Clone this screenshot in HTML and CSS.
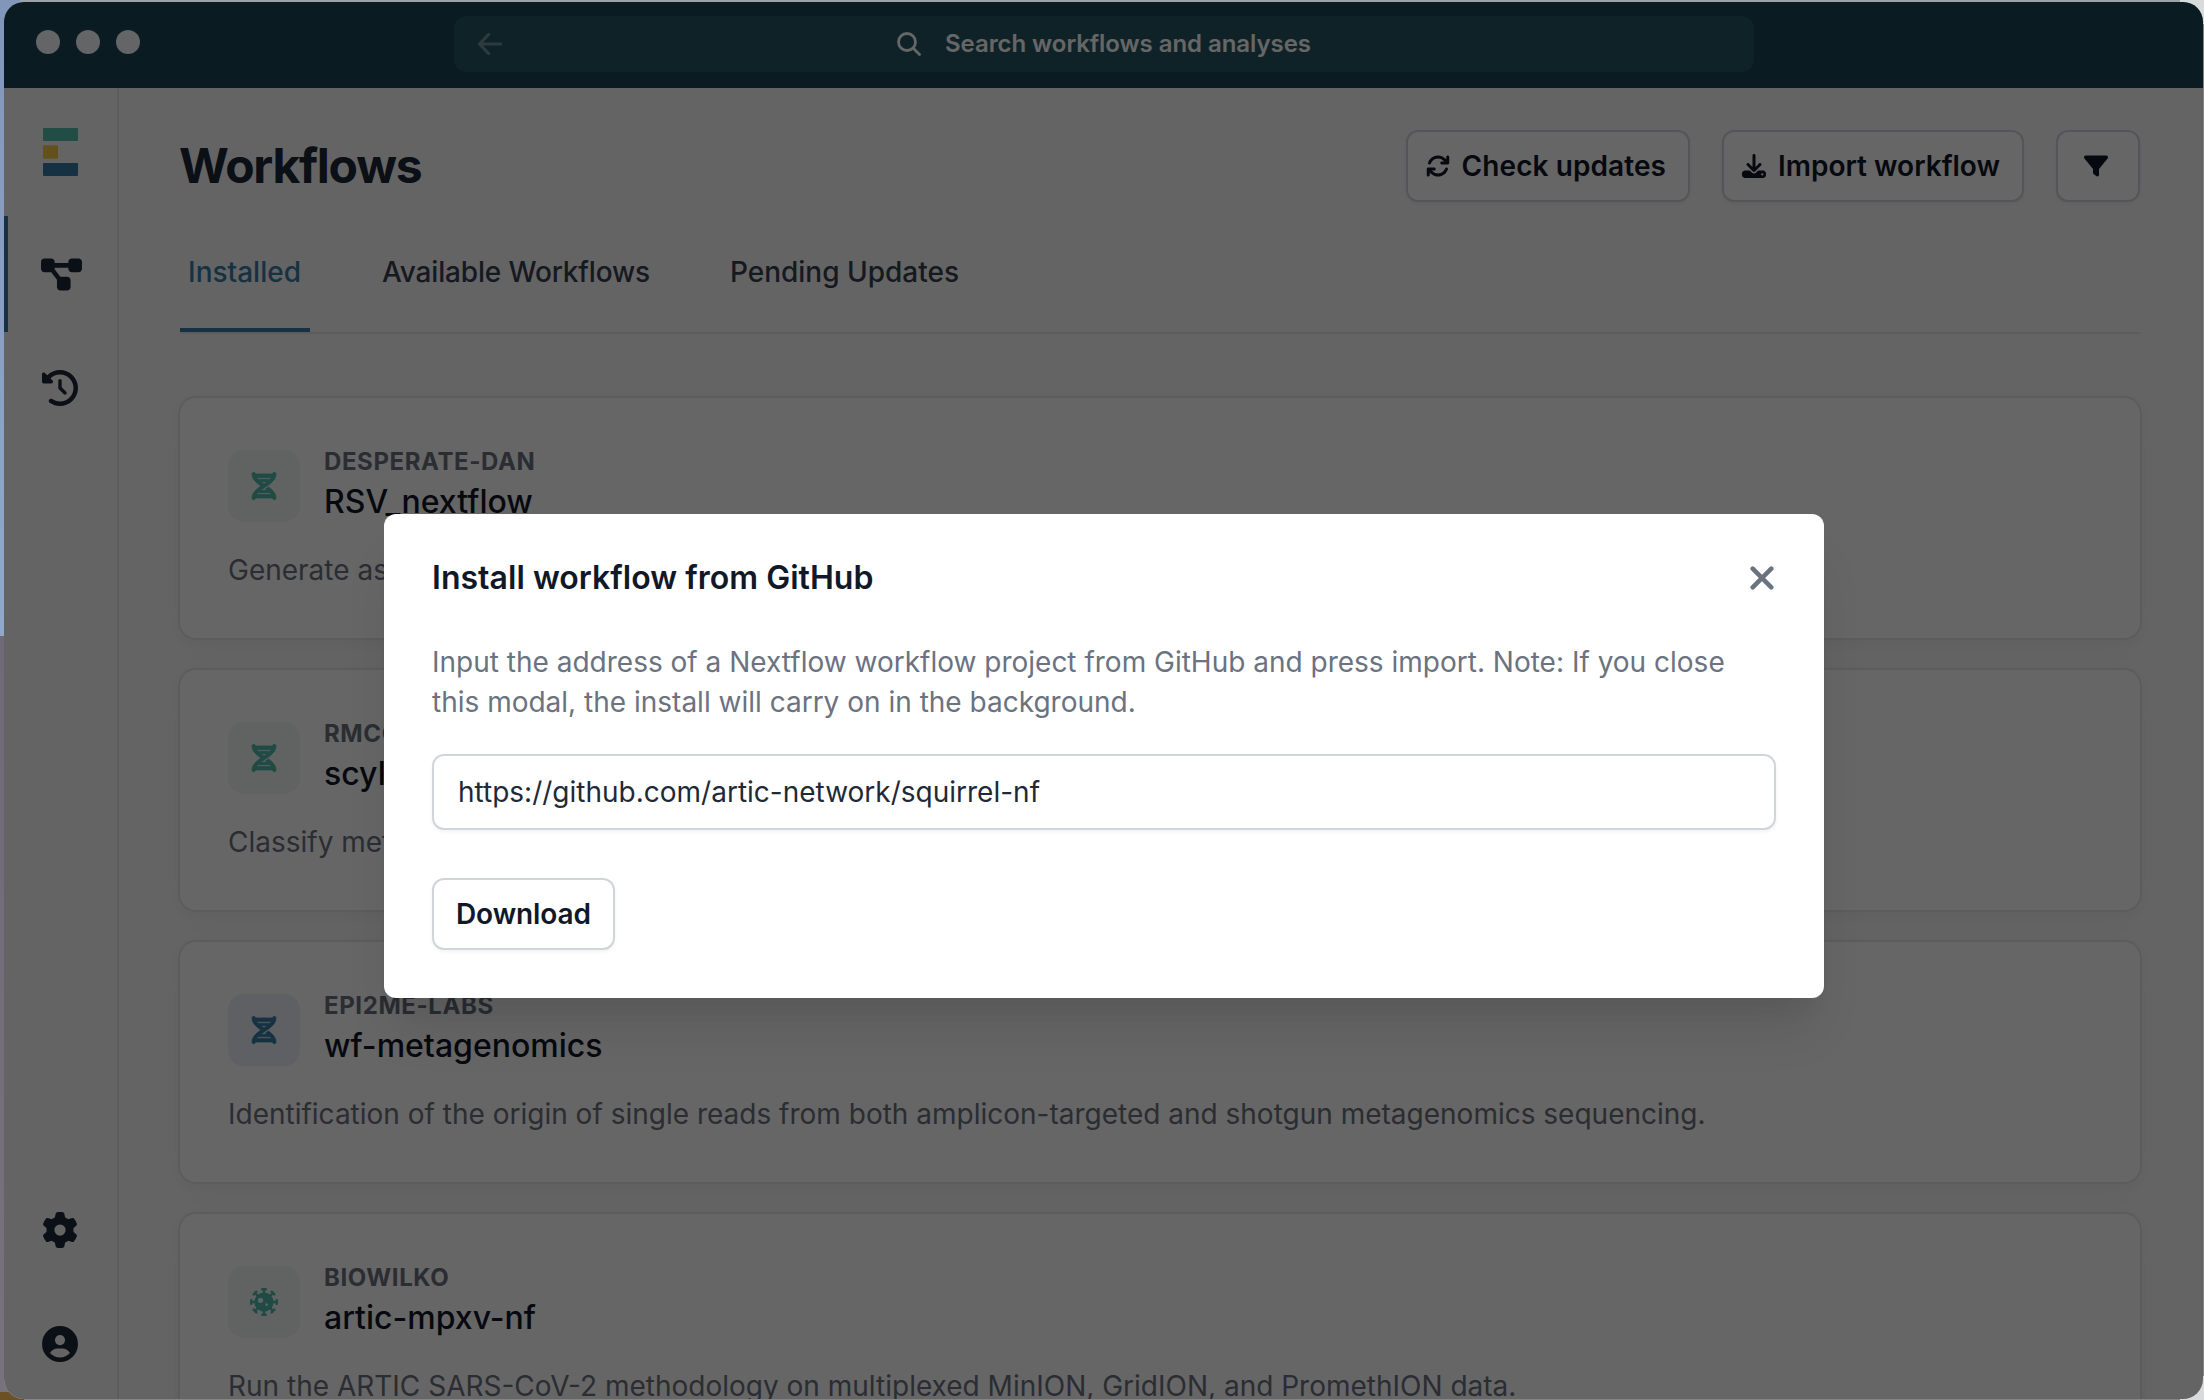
FILE: index.html
```html
<!DOCTYPE html>
<html lang="en">
<head>
<meta charset="utf-8">
<title>Workflows</title>
<link rel="stylesheet" href="styles.css">
</head>
<body>
<svg class="sprite" aria-hidden="true">
  <symbol id="i-dna" viewBox="0 0 448 512"><path stroke="currentColor" stroke-width="14" d="M416 0c17.700 0 32 14.300 32 32c0 59.800-30.300 107.500-69.400 146.600c-28 28-62.500 53.500-97.300 77.400l-2.500 1.700c-11.900 8.100-23.800 16.100-35.500 23.900l-1.600 1c-6 4-11.900 7.900-17.800 11.900c-20.900 14-40.800 27.700-59.300 41.500H283.300c-9.800-7.400-20.100-14.700-30.700-22.100l7-4.700 3-2c15.100-10.100 30.900-20.600 46.700-31.600c25 18.100 48.900 37.300 69.400 57.700C417.700 372.500 448 420.200 448 480c0 17.700-14.300 32-32 32s-32-14.300-32-32H64c0 17.700-14.300 32-32 32s-32-14.300-32-32c0-59.800 30.300-107.500 69.400-146.600c28-28 62.500-53.500 97.300-77.400c-34.800-23.900-69.300-49.300-97.300-77.400C30.300 139.500 0 91.800 0 32C0 14.300 14.300 0 32 0S64 14.300 64 32H384c0-17.700 14.300-32 32-32zM338.600 384H109.400c-10.100 10.600-18.600 21.300-25.500 32H364.100c-6.800-10.700-15.300-21.400-25.500-32zM109.400 128H338.600c10.100-10.700 18.600-21.300 25.500-32H83.900c6.800 10.700 15.300 21.300 25.500 32zm55.400 48c18.400 13.800 38.400 27.500 59.300 41.500c20.800-14 40.800-27.700 59.300-41.500H164.800z"/></symbol>
  <symbol id="i-virus" viewBox="0 0 512 512"><g fill="none" stroke="currentColor" stroke-width="46" stroke-linecap="round"><path d="M256 24V90M256 422V488M24 256H90M422 256H488M92 92L140 140M372 372L420 420M420 92L372 140M140 372L92 420M222 24H290M222 488H290M24 222V290M488 222V290M68 116L116 68M396 68L444 116M68 396L116 444M396 444L444 396"/></g><path fill-rule="evenodd" d="M256 80a176 176 0 1 0 0 352a176 176 0 1 0 0-352zM192 176a48 48 0 1 1 0 96a48 48 0 1 1 0-96zM304 280a24 24 0 1 1 0 48a24 24 0 1 1 0-48z"/></symbol>
</svg>

<div class="window">
  <header class="titlebar">
    <div class="lights"><i></i><i></i><i></i></div>
    <div class="search">
      <svg class="back" viewBox="0 0 24 22" fill="none" stroke="currentColor" stroke-width="3.200" stroke-linecap="round" stroke-linejoin="round"><path d="M22.500 11H1.500M10.500 1.500L1.500 11L10.500 20.500"/></svg>
      <svg class="glass" viewBox="0 0 24 24" fill="none" stroke="currentColor" stroke-width="2.800" stroke-linecap="round"><circle cx="10" cy="10" r="8.500"/><path d="M16.300 16.300L22.500 22.500"/></svg>
      <span>Search workflows and analyses</span>
    </div>
  </header>

  <div class="body">
    <nav class="sidebar">
      <svg class="logo" viewBox="0 0 35 48"><rect width="35" height="13" rx="1" fill="#55bfae"/><rect y="17.300" width="15" height="13.500" rx="1" fill="#f6ca4a"/><rect y="35" width="35" height="13" rx="1" fill="#387da6"/></svg>
      <a class="nav active"><svg class="wide" viewBox="0 0 576 512"><path d="M0 80C0 53.500 21.500 32 48 32h96c26.500 0 48 21.500 48 48V96H384V80c0-26.500 21.500-48 48-48h96c26.500 0 48 21.500 48 48v96c0 26.500-21.500 48-48 48H432c-26.500 0-48-21.500-48-48V160H192v16c0 1.700-.1 3.400-.3 5L272 288h96c26.500 0 48 21.500 48 48v96c0 26.500-21.500 48-48 48H272c-26.500 0-48-21.500-48-48V336c0-1.700 .1-3.400 .3-5L144 224H48c-26.500 0-48-21.500-48-48V80z"/></svg></a>
      <a class="nav"><svg viewBox="0 0 512 512"><path d="M75 75L41 41C25.900 25.900 0 36.600 0 57.900V168c0 13.300 10.700 24 24 24H134.100c21.400 0 32.100-25.900 17-41l-30.800-30.800C155 85.500 203 64 256 64c106 0 192 86 192 192s-86 192-192 192c-40.800 0-78.600-12.700-109.700-34.400c-14.500-10.100-34.400-6.600-44.600 7.900s-6.600 34.400 7.900 44.600C151.200 495 201.700 512 256 512c141.400 0 256-114.600 256-256S397.400 0 256 0C185.300 0 121.300 28.700 75 75zm181 53c-13.300 0-24 10.700-24 24V256c0 6.400 2.500 12.500 7 17l72 72c9.400 9.400 24.600 9.400 33.900 0s9.400-24.600 0-33.900l-65-65V152c0-13.300-10.700-24-24-24z"/></svg></a>
      <a class="nav push"><svg viewBox="0 0 512 512"><path d="M495.900 166.600c3.200 8.700 .5 18.400-6.400 24.600l-43.300 39.400c1.100 8.300 1.700 16.800 1.700 25.400s-.6 17.100-1.700 25.400l43.300 39.400c6.900 6.200 9.600 15.900 6.400 24.600c-4.400 11.900-9.700 23.300-15.800 34.300l-4.700 8.100c-6.600 11-14 21.400-22.100 31.200c-5.900 7.200-15.700 9.600-24.500 6.800l-55.700-17.700c-13.400 10.300-28.200 18.900-44 25.400l-12.500 57.100c-2 9.100-9 16.300-18.200 17.800c-13.800 2.300-28 3.500-42.500 3.500s-28.700-1.200-42.500-3.500c-9.200-1.500-16.200-8.700-18.200-17.800l-12.500-57.100c-15.800-6.500-30.600-15.100-44-25.400L83.100 425.900c-8.800 2.800-18.600 .3-24.500-6.800c-8.100-9.800-15.500-20.200-22.100-31.200l-4.700-8.100c-6.100-11-11.400-22.400-15.800-34.300c-3.200-8.700-.5-18.400 6.400-24.600l43.300-39.400C64.600 273.100 64 264.600 64 256s.6-17.100 1.700-25.400L22.400 191.200c-6.900-6.200-9.600-15.900-6.400-24.600c4.400-11.900 9.700-23.300 15.800-34.300l4.700-8.100c6.600-11 14-21.400 22.100-31.200c5.900-7.200 15.700-9.600 24.500-6.800l55.700 17.700c13.400-10.300 28.200-18.900 44-25.400l12.500-57.100c2-9.100 9-16.300 18.200-17.800C227.300 1.200 241.500 0 256 0s28.700 1.200 42.500 3.500c9.200 1.500 16.200 8.700 18.200 17.800l12.500 57.100c15.800 6.500 30.600 15.100 44 25.400l55.700-17.700c8.800-2.800 18.600-.3 24.500 6.800c8.100 9.800 15.500 20.200 22.100 31.200l4.700 8.100c6.100 11 11.400 22.400 15.800 34.300zM256 336a80 80 0 1 0 0-160 80 80 0 1 0 0 160z"/></svg></a>
      <a class="nav"><svg viewBox="0 0 512 512"><path d="M399 384.200C376.900 345.800 335.400 320 288 320H224c-47.400 0-88.900 25.800-111 64.200c35.200 39.200 86.200 63.800 143 63.800s107.800-24.700 143-63.800zM0 256a256 256 0 1 1 512 0A256 256 0 1 1 0 256zm256 16a72 72 0 1 0 0-144 72 72 0 1 0 0 144z"/></svg></a>
    </nav>

    <main class="main">
      <div class="heading">
        <h1>Workflows</h1>
        <button class="btn check"><svg viewBox="0 0 512 512"><path d="M105.100 202.600c7.700-21.800 20.200-42.300 37.800-59.800c62.500-62.500 163.800-62.500 226.300 0L386.300 160H336c-17.700 0-32 14.300-32 32s14.300 32 32 32H463.500c17.700 0 32-14.300 32-32V64c0-17.700-14.300-32-32-32s-32 14.300-32 32v51.200L414.400 97.600c-87.500-87.500-229.300-87.500-316.800 0C73.200 122 55.600 150.700 44.800 181.400c-5.900 16.700 2.900 34.900 19.500 40.800s34.900-2.900 40.800-19.500zM39 289.300c-5 1.500-9.800 4.200-13.700 8.200c-4 4-6.700 8.800-8.100 14c-.3 1.200-.6 2.500-.8 3.800c-.3 1.700-.4 3.400-.4 5.100V448c0 17.700 14.300 32 32 32s32-14.300 32-32V396.900l17.600 17.500c87.500 87.400 229.300 87.400 316.700 0c24.400-24.400 42.100-53.100 52.900-83.700c5.900-16.700-2.900-34.900-19.500-40.800s-34.900 2.900-40.800 19.500c-7.700 21.800-20.200 42.300-37.800 59.800c-62.500 62.500-163.800 62.500-226.300 0l-.1-.1L125.600 352H176c17.700 0 32-14.300 32-32s-14.300-32-32-32H48.400c-1.600 0-3.200 .1-4.800 .3s-3.100 .5-4.600 1z"/></svg>Check updates</button>
        <button class="btn"><svg viewBox="0 0 512 512"><path d="M288 32c0-17.700-14.300-32-32-32s-32 14.300-32 32V274.700l-73.400-73.400c-12.500-12.500-32.800-12.500-45.300 0s-12.500 32.800 0 45.300l128 128c12.500 12.500 32.800 12.500 45.300 0l128-128c12.500-12.500 12.500-32.800 0-45.300s-32.800-12.500-45.300 0L288 274.700V32zM64 352c-35.300 0-64 28.700-64 64v32c0 35.300 28.700 64 64 64H448c35.300 0 64-28.700 64-64V416c0-35.300-28.700-64-64-64H346.500l-45.300 45.300c-25 25-65.500 25-90.500 0L165.500 352H64zm368 56a24 24 0 1 1 0 48 24 24 0 1 1 0-48z"/></svg>Import workflow</button>
        <button class="btn icon" aria-label="Filter"><svg viewBox="0 0 512 512"><path d="M3.900 54.900C10.500 40.900 24.500 32 40 32H472c15.500 0 29.500 8.900 36.100 22.900s4.600 30.500-5.200 42.500L320 320.900V448c0 12.100-6.800 23.200-17.700 28.600s-23.800 4.300-33.500-3l-64-48c-8.100-6-12.800-15.500-12.800-25.600V320.900L9 97.300C-.7 85.400-2.800 68.800 3.900 54.900z"/></svg></button>
      </div>
      <div class="tabs"><a class="on">Installed</a><a class="long">Available Workflows</a><a>Pending Updates</a></div>

      <section class="cards">
        <article class="card">
          <div class="top"><div class="tile"><svg><use href="#i-dna"/></svg></div><div><div class="org">desperate-dan</div><div class="name">RSV_nextflow</div></div></div>
          <p>Generate assemblies</p>
        </article>
        <article class="card">
          <div class="top"><div class="tile"><svg><use href="#i-dna"/></svg></div><div><div class="org">rmcolq</div><div class="name">scylla</div></div></div>
          <p>Classify metagenomic</p>
        </article>
        <article class="card">
          <div class="top"><div class="tile blue"><svg><use href="#i-dna"/></svg></div><div><div class="org">epi2me-labs</div><div class="name">wf-metagenomics</div></div></div>
          <p>Identification of the origin of single reads from both amplicon-targeted and shotgun metagenomics sequencing.</p>
        </article>
        <article class="card">
          <div class="top"><div class="tile"><svg class="virus"><use href="#i-virus"/></svg></div><div><div class="org">biowilko</div><div class="name">artic-mpxv-nf</div></div></div>
          <p>Run the ARTIC SARS-CoV-2 methodology on multiplexed MinION, GridION, and PromethION data.</p>
        </article>
      </section>
    </main>
  </div>

  <div class="overlay">
    <div class="modal" role="dialog">
      <div class="modal-head">
        <h2>Install workflow from GitHub</h2>
        <svg viewBox="0 0 24 24" fill="none" stroke="currentColor" stroke-width="4.500" stroke-linecap="round"><path d="M2.700 2.700L21.300 21.300M21.300 2.700L2.700 21.300"/></svg>
      </div>
      <p>Input the address of a Nextflow workflow project from GitHub and press import. Note: If you close this modal, the install will carry on in the background.</p>
      <input type="text" value="https://github.com/artic-network/squirrel-nf" spellcheck="false">
      <button class="btn download">Download</button>
    </div>
  </div>
</div>
</body>
</html>
```
FILE: styles.css
```css
* { box-sizing: border-box; }
body {
  margin: 0;
  height: 1400px;
  overflow: hidden;
  padding: 2px 1px 1px 4px;
  font-family: Inter, "Liberation Sans", sans-serif;
  font-size: 28px;
  color: #111827;
  background:
    linear-gradient(#d9dadc, #d9dadc) 100% 0 / 24px 24px no-repeat,
    linear-gradient(#d9dadc, #d9dadc) 100% 100% / 24px 24px no-repeat,
    linear-gradient(#858585, #858585) 100% 0 / 1px 100% no-repeat,
    linear-gradient(#858585, #858585) 24px 100% / 100% 1px no-repeat,
    linear-gradient(#9ba3a8, #9ba3a8) 20px 0 / 100% 2px no-repeat,
    linear-gradient(#8296bb 0, #8fa9cc 636px, #6f6a78 636px, #77727c 1392px, #6b5123 1392px);
}
svg { display: block; fill: currentColor; }
svg[fill="none"] { fill: none; }
symbol { overflow: visible; }
.sprite { position: absolute; width: 0; height: 0; }
h1, h2, p { margin: 0; }

.window {
  position: relative;
  height: 1397px;
  border-radius: 20px;
  overflow: hidden;
  background: #fbfbfb;
  display: flex;
  flex-direction: column;
}
.titlebar {
  flex: none;
  height: 86px;
  background: #1a4555;
  display: flex;
  align-items: flex-start;
}
.lights { display: flex; gap: 16px; padding: 28px 0 0 32px; width: 450px; }
.lights i { width: 24px; height: 24px; border-radius: 50%; background: #fafcff; }
.search {
  width: 1300px;
  height: 56px;
  margin-top: 14px;
  border-radius: 12px;
  background: #235564;
  color: #fff;
  font-size: 24px;
  font-weight: 600;
  letter-spacing: -.06px;
  display: flex;
  align-items: center;
  padding-left: 24px;
}
.search span { padding-bottom: 2px; }
.back { width: 24px; height: 22px; opacity: .36; }
.glass { width: 24px; height: 24px; margin: 0 24px 0 395px; }

.body { flex: 1; min-height: 0; display: flex; }
.sidebar {
  width: 115px;
  flex: none;
  border-right: 2px solid #e5e7eb;
  display: flex;
  flex-direction: column;
}
.logo { width: 35px; height: 48px; margin: 40px 0 40px 39px; flex: none; }
.nav {
  height: 114px;
  flex: none;
  display: flex;
  align-items: center;
  padding: 0 0 2px 38px;
  color: #1c2638;
}
.nav svg { width: 36px; height: 36px; }
.nav.active { height: 116px; border-left: 4px solid #387da6; padding: 0 0 0 33px; }
.nav .wide { width: 41px; height: 37px; }
.push { margin-top: auto; }
.push, .push + .nav { padding: 3px 0 0 38px; }

.main { flex: 1; min-width: 0; padding: 42px 63px 0 61px; overflow: hidden; }
.heading { display: flex; gap: 32px; align-items: center; height: 72px; }
h1 { font-size: 48px; line-height: 72px; font-weight: 700; letter-spacing: -.026em; margin: 0 auto 0 -1px; color: #1c2638; }
.btn {
  height: 72px;
  border: 2px solid #d1d5db;
  border-radius: 12px;
  background: #fff;
  box-shadow: 0 2px 4px rgba(0, 0, 0, .05);
  font: 600 28px/40px Inter, sans-serif;
  color: #111827;
  padding: 0 22px;
  display: flex;
  align-items: center;
}
.btn svg { width: 24px; height: 24px; margin: 0 12px 0 -4px; }
.btn.icon { width: 84px; padding: 0 26px; }
.btn.icon svg { margin: 0; }
.btn.check { letter-spacing: .08px; }
.btn.download { letter-spacing: -.1px; }

.tabs { display: flex; gap: 64px; height: 132px; border-bottom: 2px solid #e5e7eb; margin-bottom: 64px; font-weight: 500; color: #374151; }
.tabs a { padding: 48px 8px 0; line-height: 44px; height: 130px; }
.tabs .on { color: #387da6; border-bottom: 4px solid #387da6; padding-right: 9px; }
.tabs .long { letter-spacing: -.16px; }

.cards { display: grid; gap: 32px; }
.card {
  height: 240px;
  border-radius: 16px;
  background: #fff;
  padding: 48px;
  box-shadow: 0 0 0 2px #e5e7eb, 0 4px 12px rgba(0, 0, 0, .05), 0 8px 50px rgba(15, 80, 50, .04);
}
.top { display: flex; gap: 24px; height: 76px; margin-bottom: 24px; }
.tile { width: 72px; height: 72px; margin-top: 4px; border-radius: 16px; background: #eff8f2; color: #50b8aa; display: grid; place-items: center; }
.tile svg { width: 24px; height: 28px; overflow: visible; }
.tile svg.virus { width: 28px; height: 28px; }
.blue { background: #eef0fa; color: #387da6; }
.org { font-size: 24px; font-weight: 700; line-height: 32px; letter-spacing: .025em; text-transform: uppercase; color: #6b7280; }
.name { font-size: 32px; font-weight: 500; line-height: 48px; color: #111827; }
.card p { line-height: 48px; color: #6b7280; white-space: nowrap; }

.overlay { position: absolute; inset: 0; background: rgba(0, 0, 0, .6); padding: 512px 0 0 380px; }
.modal {
  width: 1440px;
  height: 484px;
  background: #fff;
  border-radius: 12px;
  padding: 40px 48px 48px;
  box-shadow: 0 40px 50px -10px rgba(0, 0, 0, .1), 0 20px 20px -10px rgba(0, 0, 0, .04);
}
.modal-head { display: flex; justify-content: space-between; align-items: center; height: 48px; margin-bottom: 40px; }
.modal-head svg { width: 24px; height: 24px; color: #6b7280; margin-right: 2px; }
h2 { font-size: 32px; font-weight: 600; line-height: 48px; letter-spacing: .03px; }
.modal p { line-height: 40px; color: #6b7280; margin-bottom: 32px; }
input {
  display: block;
  width: 100%;
  height: 76px;
  border: 2px solid #d1d5db;
  border-radius: 12px;
  box-shadow: 0 2px 4px rgba(0, 0, 0, .05);
  font: 400 28px/40px Inter, sans-serif;
  color: #1f2937;
  padding: 0 24px;
  margin-bottom: 48px;
}
```
